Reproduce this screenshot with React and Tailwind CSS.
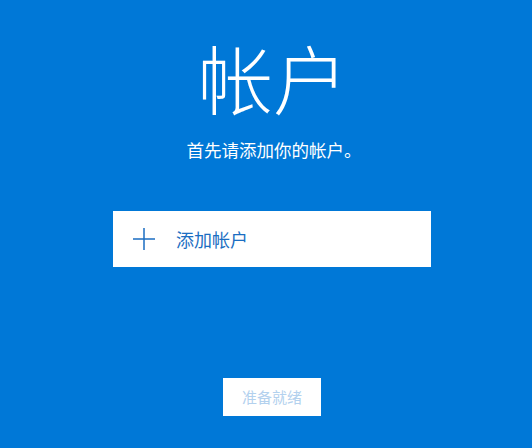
export default function App() {
  return (
    <div
      className="w-[532px] h-[448px] bg-[#0078d7] flex flex-col items-center pl-[12px]"
      style={{ fontFamily: '"Noto Sans CJK SC", "Noto Sans", sans-serif' }}
    >
      {/* heading */}
      <h1 className="mt-[31px] pl-[2px] text-[75px] leading-[92px] font-light text-white">帐户</h1>
      <p className="mt-[15px] pl-[4px] text-[17.5px] leading-6 text-white">首先请添加你的帐户。</p>

      {/* add account row */}
      <button className="mt-[49px] w-[318px] h-[56px] bg-white flex items-center pl-[20px] text-left">
        <svg width="22" height="22" viewBox="0 0 22 22" className="text-[#1b6ec2]">
          <path d="M11 0v22M0 11h22" stroke="currentColor" strokeWidth="1.5" fill="none" />
        </svg>
        <span className="ml-[21px] text-[18px] text-[#1b6ec2]">添加帐户</span>
      </button>

      {/* footer button */}
      <button className="mt-[111px] w-[98px] h-[38px] bg-white text-[15px] text-[#b3d1ee]">
        准备就绪
      </button>
    </div>
  );
}
